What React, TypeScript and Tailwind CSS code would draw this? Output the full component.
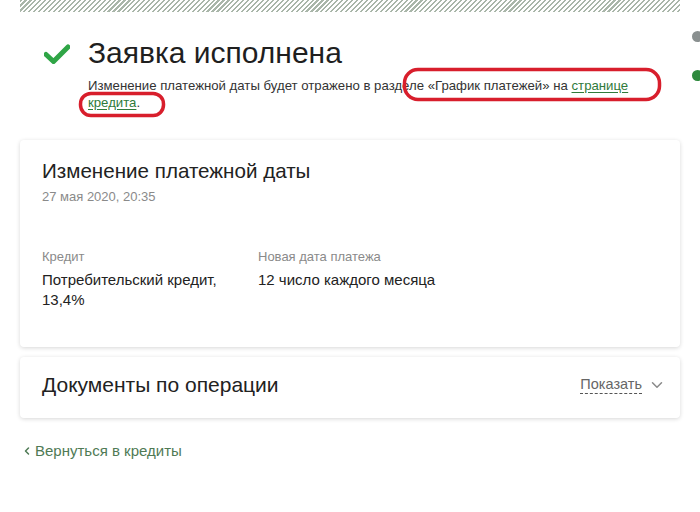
import { ChevronDown, ChevronLeft } from 'lucide-react'

function Stripes() {
  return (
    <div
      className="h-[12px] w-[660px] bg-[repeating-linear-gradient(135deg,#a9b6a9_0px,#a9b6a9_1.5px,#ffffff_1.5px,#ffffff_3.5px)]"
    />
  )
}

function Check() {
  return (
    <svg width="26" height="20" viewBox="0 0 26 20" className="mt-[8px] shrink-0">
      <path d="M2 10.5 L9.5 17.5 L24 3" fill="none" stroke="#2fa546" strokeWidth="5" strokeLinecap="round" strokeLinejoin="round" />
    </svg>
  )
}

function Oval({ className, w, h }: { className: string; w: number; h: number }) {
  return (
    <svg width={w} height={h} viewBox={`0 0 ${w} ${h}`} className={className}>
      <rect x="2.5" y="2.5" width={w - 5} height={h - 5} rx={h / 2.6} fill="none" stroke="#d81e2c" strokeWidth="3.5" />
    </svg>
  )
}

export default function App() {
  return (
    <div className="relative flex min-h-[512px] w-[700px] overflow-hidden bg-white font-['Liberation_Sans',Arial,sans-serif] text-[#222]">
      <div className="ml-[20px] flex w-[662px] flex-col">
        <Stripes />

        <div className="flex gap-[18px] pl-[24px] pt-[24px]">
          <Check />
          <div>
            <h1 className="text-[30px] leading-[34px] text-[#1f1f1f]">Заявка исполнена</h1>
            <p className="mt-[7px] w-[550px] text-[13.2px] leading-[17px] text-[#333]">
              Изменение платежной даты будет отражено в разделе «График платежей» на{' '}
              <a className="text-[#2f7a3a] underline decoration-[#2f7a3a] underline-offset-2">странице кредита</a>.
            </p>
          </div>
        </div>

        <div className="mt-[29px] rounded-[4px] bg-white px-[22px] pb-[37px] pt-[19px] shadow-[0_1px_4px_rgba(0,0,0,0.16)]">
          <h2 className="text-[20.6px] leading-[24px] text-[#222]">Изменение платежной даты</h2>
          <div className="mt-[6px] text-[13px] leading-[16px] text-[#8a8a8a]">27 мая 2020, 20:35</div>
          <div className="mt-[44px] flex">
            <div className="w-[216px]">
              <div className="text-[13px] leading-[16px] text-[#8a8a8a]">Кредит</div>
              <div className="mt-[5px] text-[15px] leading-[20px] text-[#222]">
                Потребительский кредит,
                <br />
                13,4%
              </div>
            </div>
            <div>
              <div className="text-[13px] leading-[16px] text-[#8a8a8a]">Новая дата платежа</div>
              <div className="mt-[5px] text-[15px] leading-[20px] text-[#222]">12 число каждого месяца</div>
            </div>
          </div>
        </div>

        <div className="mt-[10px] flex h-[61px] items-center justify-between rounded-[4px] bg-white pb-[6px] pl-[22px] pr-[14px] shadow-[0_1px_4px_rgba(0,0,0,0.16)]">
          <h2 className="text-[21px] leading-[24px] text-[#222]">Документы по операции</h2>
          <div className="flex items-center gap-[6px]">
            <span className="border-b border-dashed border-[#555] text-[14.5px] leading-[17px] text-[#666]">Показать</span>
            <ChevronDown size={18} strokeWidth={2} className="text-[#8a8a8a]" />
          </div>
        </div>

        <a className="mt-[24px] flex items-center gap-[2px] pl-[1px] text-[15px] leading-[18px] text-[#4f7a55]">
          <ChevronLeft size={12} strokeWidth={3} />
          Вернуться в кредиты
        </a>
      </div>

      <div className="ml-[12px] flex flex-col gap-[28px] pt-[31px]">
        <div className="h-[11px] w-[11px] rounded-full bg-[#8a9090]" />
        <div className="h-[11px] w-[11px] rounded-full bg-[#2f8a3e]" />
      </div>

      <Oval className="absolute left-[402px] top-[67px]" w={260} h={35} />
      <Oval className="absolute left-[78px] top-[91px]" w={88} h={27} />
    </div>
  )
}
